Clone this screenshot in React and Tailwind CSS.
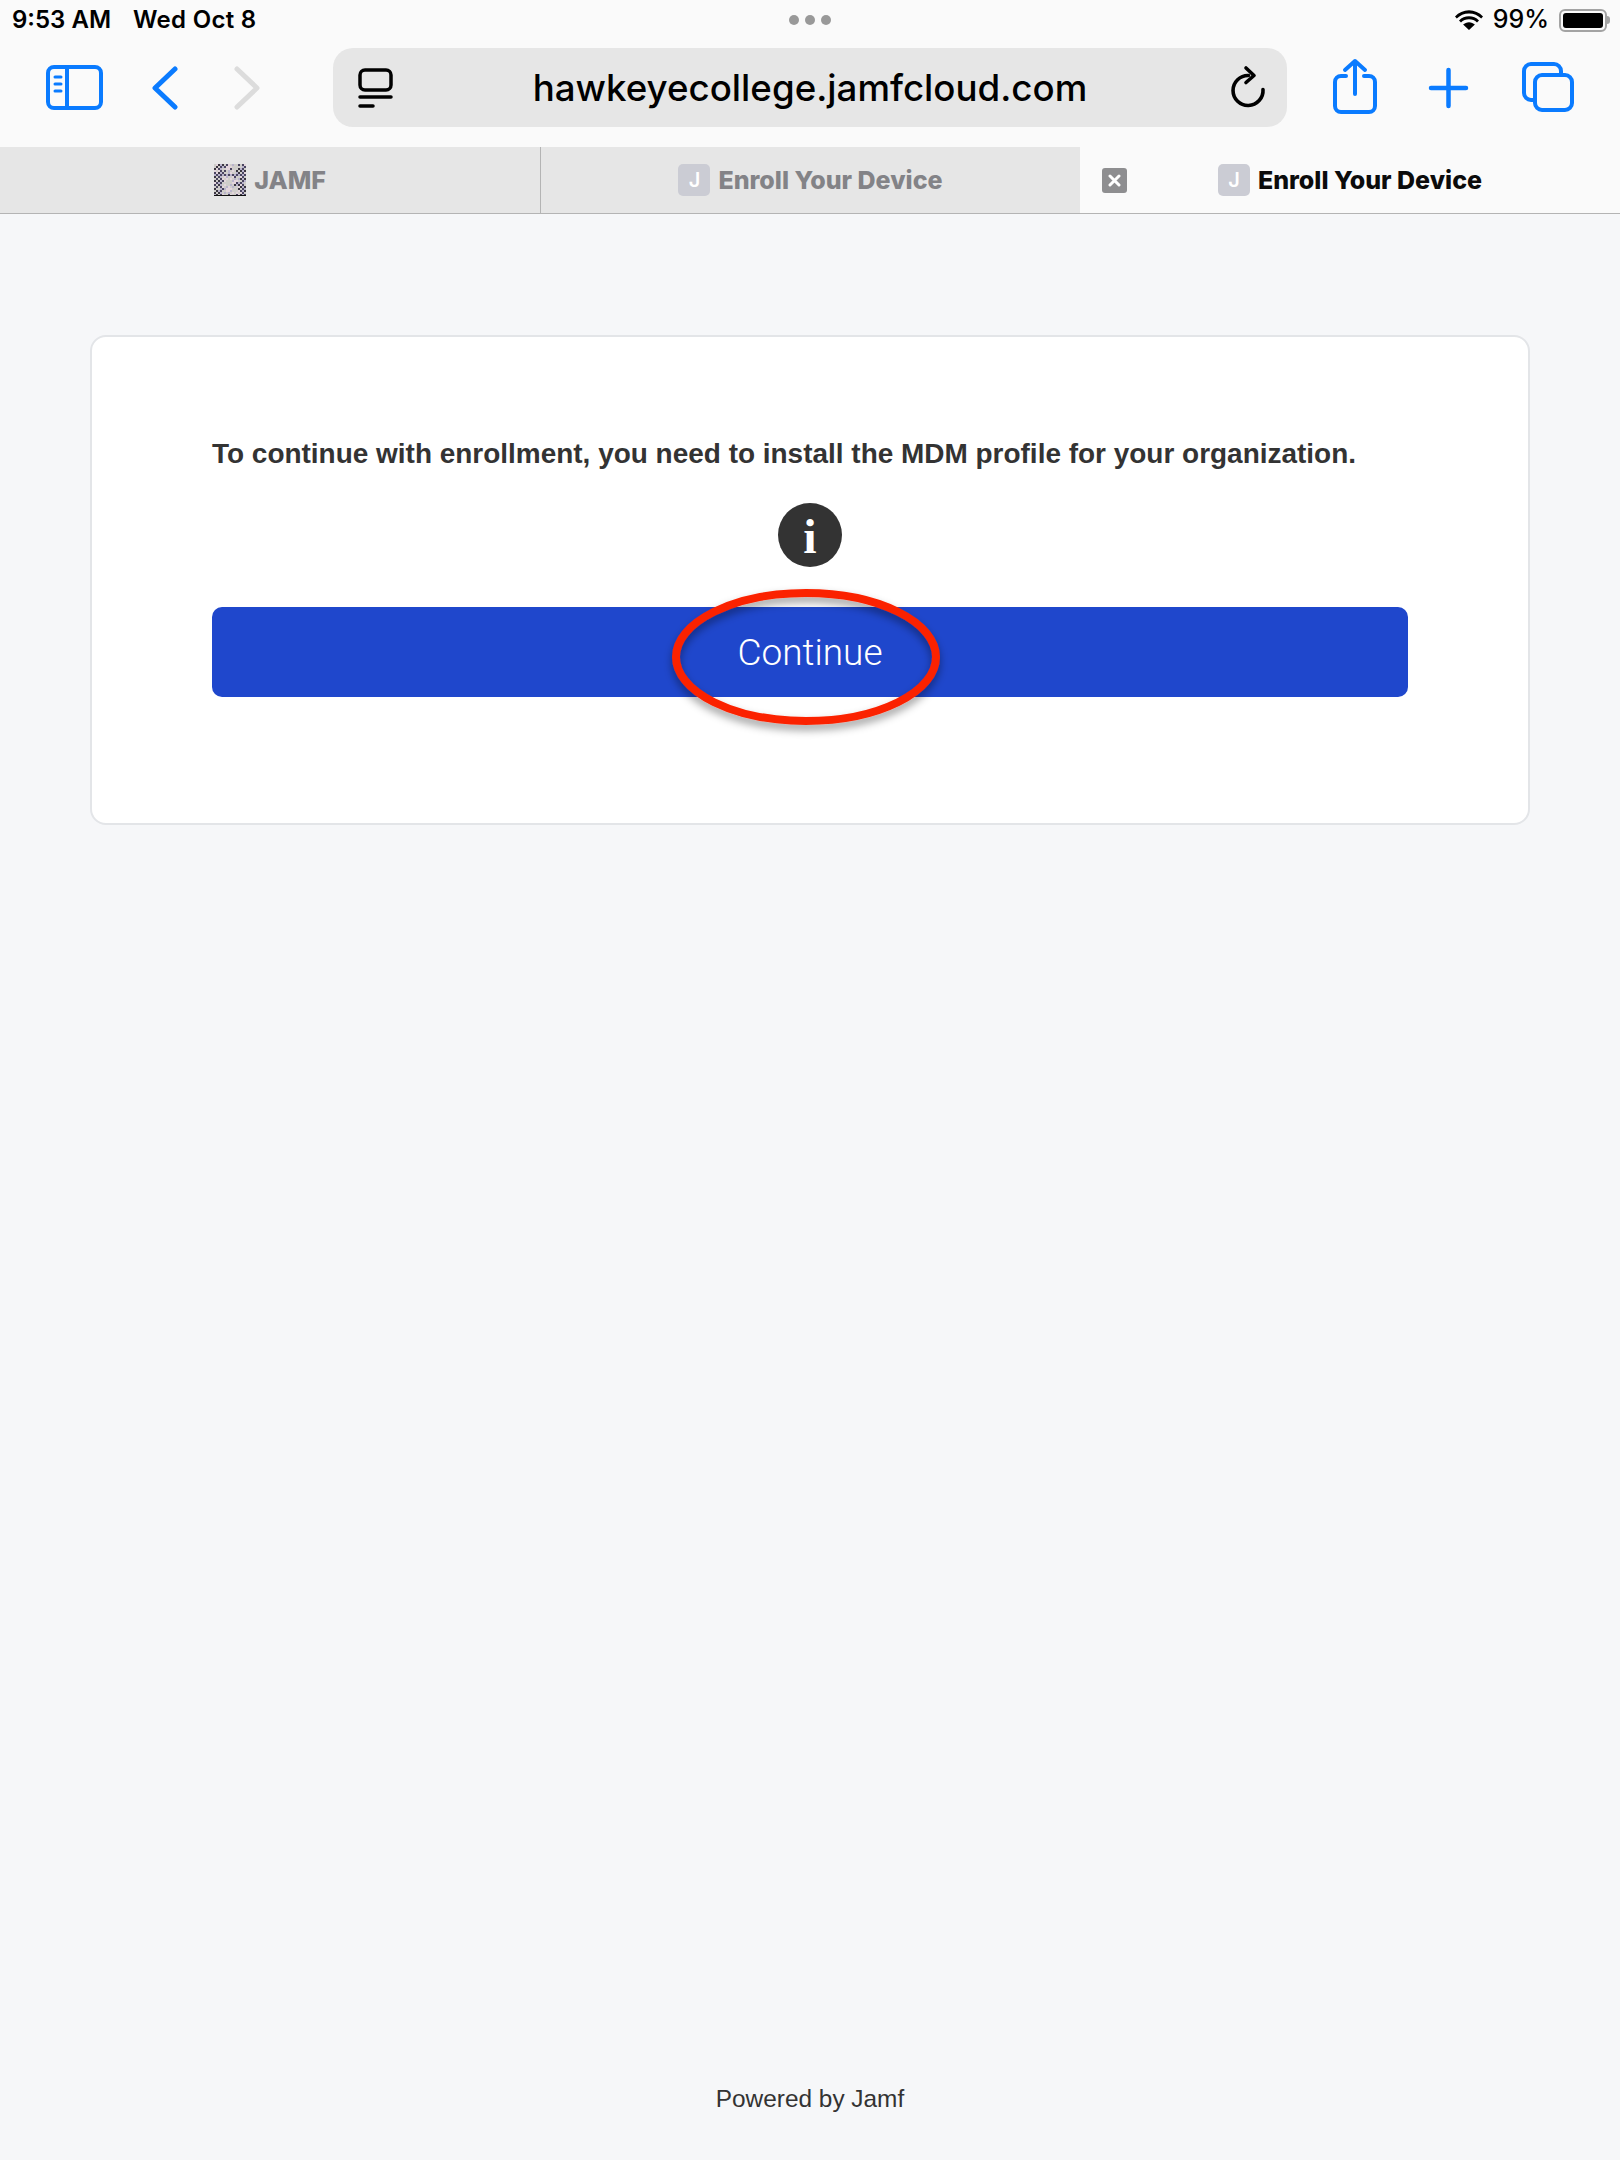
import React from 'react';

const sysFont = "font-['Inter','Noto_Sans',sans-serif]";
const pageFont = "font-['Liberation_Sans',Arial,sans-serif]";

function SidebarIcon() {
  return (
    <svg width="57" height="45" viewBox="0 0 57 45" fill="none" stroke="#0a7bff" strokeWidth="4" strokeLinecap="round">
      <rect x="2" y="2" width="53" height="41" rx="6" />
      <path d="M21 2v41" />
      <path d="M9 12h6M9 19h6M9 26h6" strokeWidth="3" />
    </svg>
  );
}

function Chevron({ flip, color }) {
  return (
    <svg width="26" height="44" viewBox="0 0 26 44" fill="none" stroke={color} strokeWidth="5" strokeLinecap="round" strokeLinejoin="round">
      <path d={flip ? 'M3 3l20 19L3 41' : 'M23 3L3 22l20 19'} />
    </svg>
  );
}

function ReaderIcon() {
  return (
    <svg width="35" height="40" viewBox="0 0 35 40" fill="none" stroke="#000" strokeWidth="3.5" strokeLinecap="round">
      <rect x="2" y="2" width="31" height="20" rx="5" />
      <path d="M2 29h31M2 38h13" />
    </svg>
  );
}

function ReloadIcon() {
  return (
    <svg width="35" height="43" viewBox="-4 0 35 43" fill="none" stroke="#000" strokeWidth="3.6" strokeLinecap="round" strokeLinejoin="round" overflow="visible">
      <path d="M32 23.500A15 15 0 1 1 17.500 9.500" />
      <path d="M15 2l8 7.500-8 7" />
    </svg>
  );
}

function ShareIcon() {
  return (
    <svg width="44" height="56" viewBox="0 0 44 56" fill="none" stroke="#0a7bff" strokeWidth="4" strokeLinecap="round" strokeLinejoin="round">
      <path d="M13 18H8a6 6 0 0 0-6 6v24a6 6 0 0 0 6 6h28a6 6 0 0 0 6-6V24a6 6 0 0 0-6-6h-5" />
      <path d="M22 36V3M12 12l10-9 10 9" />
    </svg>
  );
}

function PlusIcon() {
  return (
    <svg width="41" height="42" viewBox="0 0 41 42" fill="none" stroke="#0a7bff" strokeWidth="4.500" strokeLinecap="round">
      <path d="M20.500 3v36M3 21h35" />
    </svg>
  );
}

function TabsIcon() {
  return (
    <svg width="52" height="50" viewBox="0 0 52 50" fill="none" stroke="#0a7bff" strokeWidth="4" strokeLinejoin="round">
      <path d="M13 38H9a7 7 0 0 1-7-7V9a7 7 0 0 1 7-7h23a7 7 0 0 1 7 7v4" />
      <rect x="13" y="13" width="37" height="35" rx="7" />
    </svg>
  );
}

function WifiIcon() {
  return (
    <svg width="28" height="20" viewBox="0 0 28 20" fill="#000">
      <path d="M14 3.500c4.800 0 9 1.900 12.200 5L28 6.500C24.300 2.600 19.400.300 14 .300S3.700 2.600 0 6.500l1.800 2C5 5.400 9.200 3.500 14 3.500z" />
      <path d="M14 9.300c3.100 0 5.900 1.200 8 3.200l2-2.100C21.300 7.800 17.800 6.300 14 6.300S6.700 7.800 4 10.400l2 2.100c2.100-2 4.900-3.200 8-3.200z" />
      <path d="M14 12.200c-2.300 0-4.300.9-5.900 2.400L14 20l5.900-5.400c-1.600-1.500-3.600-2.400-5.900-2.400z" />
    </svg>
  );
}

function Battery() {
  return (
    <div className="flex items-center">
      <div className="w-12 h-[23px] rounded-[6px] border-2 border-[#a3a3a3] p-[2px]">
        <div className="w-full h-full rounded-[3px] bg-black" />
      </div>
      <div className="w-[3px] h-[8px] rounded-r-full bg-[#a3a3a3]" />
    </div>
  );
}

// the page's low-res favicon comes through as a noisy dither with a pale streak
const ditherCells = [];
for (let y = 0; y < 16; y++) {
  for (let x = 0; x < 16; x++) {
    const noise = ((x * 7 + y * 13 + x * y * 3) % 11) / 11;
    const streak = Math.abs(x - (8.500 - y * 0.120));
    const pale = streak < 2.500 ? 0.85 : streak < 4.500 ? 0.45 : 0.1;
    const isDark = (x + y) % 2 === 0 && noise > pale * 0.9;
    const tint = noise > 0.7 ? '#b9b3cc' : noise > 0.4 ? '#e3d5dc' : '#cfcdca';
    ditherCells.push({ x, y, fill: isDark ? (noise > 0.6 ? '#4a4560' : '#3a3640') : tint });
  }
}

function JamfFavicon() {
  return (
    <svg width="32" height="32" viewBox="0 0 32 32" className="shrink-0">
      {ditherCells.map((c) => (
        <rect key={`${c.x}-${c.y}`} x={c.x * 2} y={c.y * 2} width="2" height="2" fill={c.fill} />
      ))}
      <rect y="31" width="32" height="1" fill="#111" />
    </svg>
  );
}

function JFavicon() {
  return (
    <div className={`w-8 h-8 rounded-[5px] bg-[#cbccd4] flex items-center justify-center text-white text-[20px] font-semibold shrink-0 ${sysFont}`}>
      J
    </div>
  );
}

function Tab({ icon, title, active, divider }) {
  return (
    <div className={`relative h-full flex items-center justify-center gap-2 ${active ? 'bg-[#fafafa]' : 'bg-[#e6e6e6]'} ${divider ? 'border-l border-[#b4b4b4]' : ''}`}>
      {active && (
        <div className="absolute left-[22px] top-[21px] w-[25px] h-[25px] rounded-[3px] bg-[#8e8e90] flex items-center justify-center">
          <svg width="13" height="13" viewBox="0 0 13 13" fill="none" stroke="#fff" strokeWidth="3" strokeLinecap="round">
            <path d="M2 2l9 9M11 2l-9 9" />
          </svg>
        </div>
      )}
      {icon}
      <span className={`text-[25px] leading-none font-extrabold ${active ? 'text-[#0b0b0b]' : 'text-[#838387]'}`}>{title}</span>
    </div>
  );
}

export default function App() {
  return (
    <div className={`h-[2160px] flex flex-col bg-[#f6f7f9] ${pageFont}`}>
      <header className={`bg-[#fafafa] ${sysFont}`}>
        <div className="relative h-10 pl-3 pr-[10px] flex items-center justify-between text-black text-[24px] font-semibold">
          <div className="flex gap-[22px]">
            <span>9:53 AM</span>
            <span className="tracking-[0.3px]">Wed Oct 8</span>
          </div>
          <div className="absolute left-[789px] top-[15px] flex gap-[6px]">
            <div className="w-[10px] h-[10px] rounded-full bg-[#999]" />
            <div className="w-[10px] h-[10px] rounded-full bg-[#999]" />
            <div className="w-[10px] h-[10px] rounded-full bg-[#999]" />
          </div>
          <div className="flex items-center gap-[10px]">
            <WifiIcon />
            <span className="text-[25px] font-medium">99%</span>
            <Battery />
          </div>
        </div>

        <div className="flex items-center pl-[46px] pt-2 pb-5">
          <SidebarIcon />
          <div className="ml-[49px]"><Chevron color="#0a7bff" /></div>
          <div className="ml-[56px]"><Chevron flip color="#dcdcdc" /></div>
          <div className="ml-[73px] w-[954px] h-[79px] rounded-[20px] bg-[#e6e6e6] flex items-center justify-between px-[25px]">
            <ReaderIcon />
            <span className="text-[36.700px] font-medium text-black">hawkeyecollege.jamfcloud.com</span>
            <ReloadIcon />
          </div>
          <div className="ml-[46px] -mt-[3px]"><ShareIcon /></div>
          <div className="ml-[51px]"><PlusIcon /></div>
          <div className="ml-[53px] -mt-[1px]"><TabsIcon /></div>
        </div>

        <div className="grid grid-cols-3 h-[67px] border-b border-[#b4b4b4]">
          <Tab icon={<JamfFavicon />} title="JAMF" />
          <Tab icon={<JFavicon />} title="Enroll Your Device" divider />
          <Tab icon={<JFavicon />} title="Enroll Your Device" active />
        </div>
      </header>

      <main className="flex-1 flex flex-col px-[90px] pt-[121px]">
        <div className="bg-white border-2 border-[#e3e5e8] rounded-[16px] pt-[99px] pb-[126px] px-[120px] flex flex-col items-center">
          <p className="w-full text-[27.960px] leading-9 font-bold text-[#333]">
            To continue with enrollment, you need to install the MDM profile for your organization.
          </p>
          <div className="mt-[31px] w-16 h-16 rounded-full bg-[#333] flex items-center justify-center pt-1 text-white text-[48px] font-bold font-['Liberation_Serif',serif] leading-none">
            i
          </div>
          <div className="relative mt-10 w-full">
            <button className="w-full h-[90px] pt-[2px] rounded-[10px] bg-[#1f47cc] text-white text-[37px] font-light font-['Roboto',sans-serif]">Continue</button>
            <svg width="300" height="170" viewBox="0 0 300 170" fill="none" className="absolute left-[450px] -top-[28px]">
              <defs>
                <filter id="ringShadow" x="-10%" y="-10%" width="120%" height="130%">
                  <feDropShadow dx="0" dy="5" stdDeviation="4" floodColor="#000" floodOpacity="0.4" />
                </filter>
              </defs>
              <ellipse cx="144" cy="78" rx="130" ry="64" stroke="#fb2400" strokeWidth="8" filter="url(#ringShadow)" />
            </svg>
          </div>
        </div>

        <div className="mt-auto pb-[47px] text-center text-[24.400px] leading-7 text-[#333]">Powered by Jamf</div>
      </main>
    </div>
  );
}
